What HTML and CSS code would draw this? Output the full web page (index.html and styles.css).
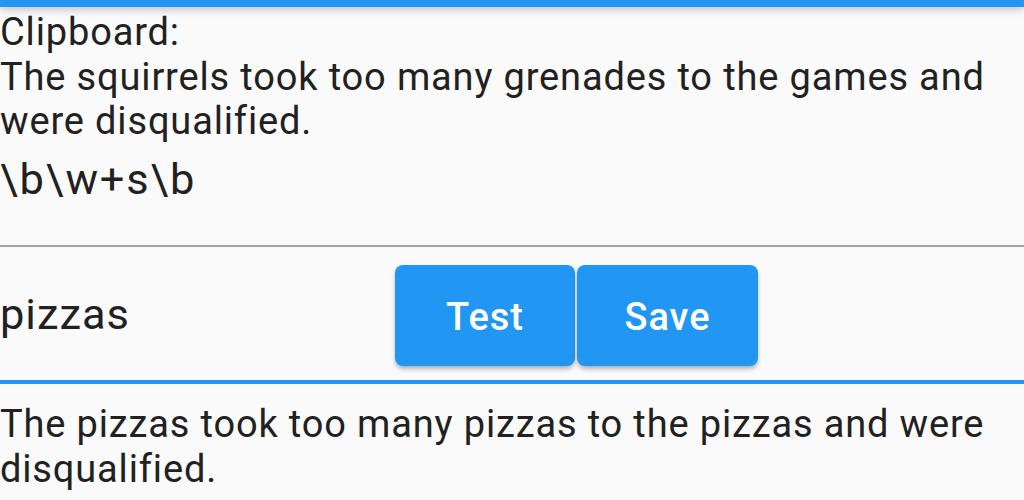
FILE: index.html
```html
<!DOCTYPE html>
<html>
<head>
<meta charset="utf-8">
<link rel="stylesheet" href="styles.css">
</head>
<body>
<div class="appbar"></div>
<main class="content">
  <div class="clipboard">Clipboard:<br>The squirrels took too many grenades to the games and were disqualified.</div>
  <div class="field regex">\b\w+s\b</div>
  <div class="field row">
    <div class="replace">pizzas</div>
    <div class="buttons">
      <button class="btn btn-test">Test</button>
      <button class="btn btn-save">Save</button>
    </div>
  </div>
  <div class="result">The pizzas took too many pizzas to the pizzas and were disqualified.</div>
</main>
</body>
</html>
```
FILE: styles.css
```css
html, body {
  margin: 0;
  padding: 0;
  background: #fafafa;
}
body {
  font-family: Roboto, "Liberation Sans", sans-serif;
  font-size: 38px;
  line-height: 44.5px;
  letter-spacing: 0.85px;
  color: #212121;
  overflow: hidden;
  width: 1024px;
  height: 500px;
}
.appbar {
  height: 7px;
  background: #2196f3;
  box-shadow: 0 2px 8px rgba(0, 0, 0, 0.28);
  position: relative;
  z-index: 2;
}
.content {
  display: flex;
  flex-direction: column;
}
.clipboard {
  padding-top: 3px;
}
.field {
  font-size: 43.4px;
  line-height: 51px;
  letter-spacing: 1px;
}
.regex {
  margin-top: 10px;
  padding-bottom: 40.5px;
  letter-spacing: 1.8px;
  border-bottom: 2px solid #a3a3a3;
}
.row {
  display: flex;
  align-items: center;
  padding-top: 18px;
  padding-bottom: 14px;
  border-bottom: 4px solid #2196f3;
}
.replace {
  width: 395px;
  padding-bottom: 2px;
}
.buttons {
  display: flex;
  gap: 2px;
}
.btn {
  height: 101px;
  border: none;
  border-radius: 8px;
  background: #2196f3;
  color: #ffffff;
  font-family: Roboto, "Liberation Sans", sans-serif;
  font-weight: 500;
  font-size: 38px;
  letter-spacing: 1px;
  padding: 2px 0 0 0;
  box-shadow: 0 4px 5px -1px rgba(0, 0, 0, 0.22), 0 2px 4px rgba(0, 0, 0, 0.12);
}
.btn-test {
  width: 180px;
}
.btn-save {
  width: 181px;
}
.result {
  margin-top: 18px;
}
```
